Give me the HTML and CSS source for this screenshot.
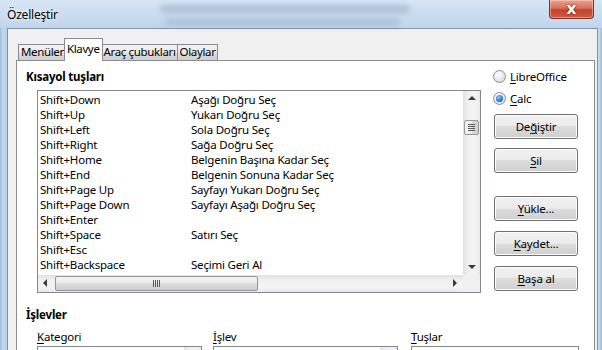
FILE: index.html
```html
<!DOCTYPE html>
<html>
    <head>
        <link rel="stylesheet" href="styles.css">
    </head>

    <body>
        <div class="window">
            <div class="titlebar">
                <div class="glass-blur blur-one"></div>
                <div class="glass-blur blur-two"></div>
                <span class="title">Özelleştir</span>
                <div class="close-button"><span>x</span></div>
            </div>

            <div class="frame-row">
                <div class="client">
                    <div class="tabs">
                        <div class="tab">Menüler</div>
                        <div class="tab active">Klavye</div>
                        <div class="tab">Araç çubukları</div>
                        <div class="tab">Olaylar</div>
                    </div>

                    <div class="page">
                        <div class="top-section">
                            <div class="shortcuts">
                                <div class="group-label">Kısayol tuşları</div>

                                <div class="listbox">
                                    <div class="rows">
                                        <div class="row"><span class="key">Shift+Down</span><span>Aşağı Doğru Seç</span></div>
                                        <div class="row"><span class="key">Shift+Up</span><span>Yukarı Doğru Seç</span></div>
                                        <div class="row"><span class="key">Shift+Left</span><span>Sola Doğru Seç</span></div>
                                        <div class="row"><span class="key">Shift+Right</span><span>Sağa Doğru Seç</span></div>
                                        <div class="row"><span class="key">Shift+Home</span><span>Belgenin Başına Kadar Seç</span></div>
                                        <div class="row"><span class="key">Shift+End</span><span>Belgenin Sonuna Kadar Seç</span></div>
                                        <div class="row"><span class="key">Shift+Page Up</span><span>Sayfayı Yukarı Doğru Seç</span></div>
                                        <div class="row"><span class="key">Shift+Page Down</span><span>Sayfayı Aşağı Doğru Seç</span></div>
                                        <div class="row"><span class="key">Shift+Enter</span><span></span></div>
                                        <div class="row"><span class="key">Shift+Space</span><span>Satırı Seç</span></div>
                                        <div class="row"><span class="key">Shift+Esc</span><span></span></div>
                                        <div class="row"><span class="key">Shift+Backspace</span><span>Seçimi Geri Al</span></div>
                                        <div class="row"><span class="key">Shift+Insert</span><span></span></div>
                                    </div>

                                    <div class="vscroll">
                                        <div class="arrow arrow-up"></div>
                                        <div class="vthumb"><div class="grip-v"></div></div>
                                        <div class="vtrack"></div>
                                        <div class="arrow arrow-down"></div>
                                    </div>

                                    <div class="hscroll">
                                        <div class="arrow arrow-left"></div>
                                        <div class="hthumb"><div class="grip-h"></div></div>
                                        <div class="htrack"></div>
                                        <div class="arrow arrow-right"></div>
                                    </div>

                                    <div class="corner"></div>
                                </div>
                            </div>

                            <div class="side">
                                <label class="radio-row"><span class="radio"></span><span><u>L</u>ibreOffice</span></label>
                                <label class="radio-row"><span class="radio checked"></span><span><u>C</u>alc</span></label>

                                <button class="btn btn-change">De<u>ğ</u>iştir</button>
                                <button class="btn btn-delete"><u>S</u>il</button>
                                <button class="btn btn-load"><u>Y</u>ükle...</button>
                                <button class="btn btn-save"><u>K</u>aydet...</button>
                                <button class="btn btn-reset"><u>B</u>aşa al</button>
                            </div>
                        </div>

                        <div class="group-label functions-label">İşlevler</div>

                        <div class="functions">
                            <div class="func-col col-category">
                                <div class="func-label"><u>K</u>ategori</div>
                                <div class="func-box"><div class="box-scroll"></div></div>
                            </div>
                            <div class="func-col col-function">
                                <div class="func-label"><u>İ</u>şlev</div>
                                <div class="func-box"><div class="box-scroll"></div></div>
                            </div>
                            <div class="func-col col-keys">
                                <div class="func-label"><u>T</u>uşlar</div>
                                <div class="func-box"></div>
                            </div>
                        </div>
                    </div>
                </div>
            </div>
        </div>
    </body>
</html>
```

FILE: styles.css
```css
* {
    box-sizing: border-box;
}

body {
    margin: 0;
    width: 602px;
    height: 350px;
    overflow: hidden;
    font-family: "Noto Sans", "Open Sans", sans-serif;
    font-size: 11.5px;
    letter-spacing: -0.2px;
    color: #000;
    background: #b8cfe8;
}

u {
    text-decoration-thickness: 1px;
    text-underline-offset: 2px;
}

.window {
    width: 602px;
    height: 350px;
    display: flex;
    flex-direction: column;
    background: linear-gradient(to right, #9fbbdb 0, #c5d9ee 3px, #b9d0e9 6px, #b9d0e9 596px, #c9dcf0 599px, #9ab6d6 602px);
}

/* title bar */

.titlebar {
    position: relative;
    height: 28px;
    flex: none;
    background: linear-gradient(to bottom, #d7e5f4, #c9dbef 60%, #c0d5ec);
}

.title {
    position: absolute;
    left: 7px;
    top: 7px;
    line-height: 16px;
    font-size: 12px;
    color: #000;
    text-shadow: 0 0 6px #eef5fc, 0 0 3px #eef5fc;
}

.glass-blur {
    position: absolute;
    background: #6f86a6;
    filter: blur(3px);
    opacity: 0.45;
    border-radius: 3px;
}

.blur-one {
    left: 160px;
    top: 6px;
    width: 250px;
    height: 6px;
}

.blur-two {
    left: 165px;
    top: 19px;
    width: 235px;
    height: 6px;
    opacity: 0.35;
}

.close-button {
    position: absolute;
    left: 549px;
    top: 0;
    width: 45px;
    height: 19px;
    border: 1px solid #7b3125;
    border-top: none;
    border-radius: 0 0 4px 4px;
    background: linear-gradient(to bottom, #e8a493 0, #d9705c 45%, #c4432d 55%, #cf5b3f 100%);
    box-shadow: inset 0 0 0 1px rgba(255, 220, 210, 0.45);
    display: flex;
    justify-content: center;
    align-items: center;
}

.close-button span {
    font-family: "DejaVu Sans", sans-serif;
    font-weight: bold;
    font-size: 16px;
    line-height: 15px;
    letter-spacing: 0;
    color: #fff;
    margin-top: -2px;
    text-shadow: 0 0 2px #5a1a10, 0 0 1px #5a1a10;
}

/* dialog client area */

.frame-row {
    flex: 1;
    padding-left: 7px;
}

.client {
    width: 591px;
    height: 100%;
    background: #f0f0f0;
    border: 1px solid #7f93ab;
    border-bottom: none;
    padding: 9px 2px 0 8px;
}

.tabs {
    display: flex;
    align-items: flex-end;
    height: 22px;
    padding-left: 2px;
    letter-spacing: -0.35px;
}

.tab {
    height: 16px;
    padding: 0 1px 0 2px;
    line-height: 14px;
    border: 1px solid #898c95;
    border-bottom: none;
    margin-right: -1px;
    background: linear-gradient(to bottom, #f2f2f2, #ebebeb 50%, #dddddd 50%, #cfcfcf);
}

.tab.active {
    position: relative;
    z-index: 2;
    height: 23px;
    margin: 0 -2px -1px -1px;
    padding: 3px 2px 0;
    line-height: 14px;
    background: #fff;
}

.page {
    background: #fff;
    border: 1px solid #898c95;
    height: 300px;
    padding: 8px 0 0 9px;
}

/* shortcut list */

.top-section {
    display: flex;
}

.group-label {
    font-weight: bold;
    line-height: 15px;
}

.listbox {
    margin: 6px 0 0 11px;
    width: 444px;
    height: 203px;
    border: 1px solid #828790;
    display: grid;
    grid-template-columns: 1fr 17px;
    grid-template-rows: 1fr 17px;
}

.rows {
    overflow: hidden;
    padding: 1px 0 0 2px;
}

.row {
    display: flex;
    height: 15px;
    line-height: 15px;
    white-space: nowrap;
}

.key {
    width: 151px;
}

.vscroll {
    display: flex;
    flex-direction: column;
    background: linear-gradient(to right, #e2e2e2, #f0f0f0 30%, #f4f4f4 70%, #eaeaea);
}

.hscroll {
    display: flex;
    background: linear-gradient(to bottom, #e2e2e2, #f0f0f0 30%, #f4f4f4 70%, #eaeaea);
}

.corner {
    background: #f0f0f0;
}

.arrow {
    width: 17px;
    height: 17px;
    flex: none;
    position: relative;
}

.arrow::after {
    content: "";
    position: absolute;
    width: 0;
    height: 0;
    border: 4px solid transparent;
}

.arrow-up::after {
    left: 5px;
    top: 5px;
    border-bottom-color: #3c3c3c;
    border-top-width: 0;
}

.arrow-down::after {
    left: 5px;
    top: 7px;
    border-top-color: #3c3c3c;
    border-bottom-width: 0;
}

.arrow-left::after {
    left: 5px;
    top: 4px;
    border-right-color: #3c3c3c;
    border-left-width: 0;
}

.arrow-right::after {
    left: 7px;
    top: 4px;
    border-left-color: #3c3c3c;
    border-right-width: 0;
}

.vthumb {
    margin: 12px 1px 0 1px;
    height: 15px;
    flex: none;
    border: 1px solid #979797;
    border-radius: 2px;
    background: linear-gradient(to right, #f3f3f3, #ececec 50%, #dbdbdb 50%, #d0d0d0);
    display: flex;
    justify-content: center;
    align-items: center;
}

.grip-v {
    width: 7px;
    height: 7px;
    background: repeating-linear-gradient(to bottom, #5b5b5b 0 1px, transparent 1px 2px);
}

.vtrack {
    flex: 1;
}

.hthumb {
    margin: 1px 0 1px 0;
    width: 203px;
    flex: none;
    border: 1px solid #979797;
    border-radius: 2px;
    background: linear-gradient(to bottom, #f3f3f3, #ececec 50%, #dbdbdb 50%, #d0d0d0);
    display: flex;
    justify-content: center;
    align-items: center;
}

.grip-h {
    width: 7px;
    height: 7px;
    background: repeating-linear-gradient(to right, #5b5b5b 0 1px, transparent 1px 2px);
}

.htrack {
    flex: 1;
}

/* right column */

.side {
    margin-left: 13px;
    width: 84px;
    display: flex;
    flex-direction: column;
}

.radio-row {
    display: flex;
    align-items: center;
    height: 15px;
    gap: 4px;
    margin-left: -1px;
    margin-bottom: 7px;
}

.radio {
    width: 13px;
    height: 13px;
    border-radius: 50%;
    border: 1px solid #8e8f8f;
    background: radial-gradient(circle at 40% 35%, #ffffff, #e6e6e6 55%, #cfcfcf);
    display: flex;
    justify-content: center;
    align-items: center;
}

.radio.checked::after {
    content: "";
    width: 7px;
    height: 7px;
    border-radius: 50%;
    background: radial-gradient(circle at 40% 35%, #8fd0f7, #2b7ad0 55%, #10418a);
}

.btn {
    height: 25px;
    width: 84px;
    padding: 0;
    font-family: inherit;
    font-size: inherit;
    letter-spacing: inherit;
    color: #000;
    border: 1px solid #707070;
    border-radius: 3px;
    background: linear-gradient(to bottom, #f2f2f2, #ebebeb 50%, #dddddd 50%, #cfcfcf);
    box-shadow: inset 0 0 0 1px #fcfcfc;
}

.btn-change {
    margin-top: 1px;
}

.btn-delete {
    margin-top: 9px;
}

.btn-load {
    margin-top: 23px;
}

.btn-save,
.btn-reset {
    margin-top: 10px;
}

/* functions */

.functions-label {
    margin-top: 14px;
}

.functions {
    display: flex;
    padding-left: 11px;
    margin-top: 7px;
}

.func-label {
    line-height: 15px;
    height: 17px;
}

.func-box {
    height: 40px;
    border: 1px solid #828790;
    background: #fff;
    display: flex;
    justify-content: flex-end;
}

.box-scroll {
    width: 17px;
    background: linear-gradient(to right, #e2e2e2, #f0f0f0 30%, #f4f4f4 70%, #eaeaea);
}

.col-category {
    width: 165px;
    margin-right: 11px;
}

.col-function {
    width: 185px;
    margin-right: 13px;
}

.col-keys {
    width: 168px;
}
```
